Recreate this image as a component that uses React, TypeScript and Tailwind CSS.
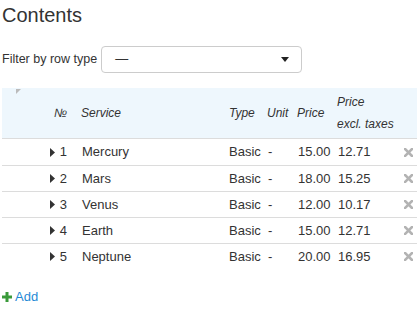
import React from "react";

const rows = [
  { n: 1, s: "Mercury", p: "15.00", e: "12.71" },
  { n: 2, s: "Mars", p: "18.00", e: "15.25" },
  { n: 3, s: "Venus", p: "12.00", e: "10.17" },
  { n: 4, s: "Earth", p: "15.00", e: "12.71" },
  { n: 5, s: "Neptune", p: "20.00", e: "16.95" },
];

const cols = "grid grid-cols-[76px_147px_38px_30px_40px_65px_1fr]";

function Tri() {
  return (
    <svg width="5" height="9" viewBox="0 0 5 9" className="inline-block">
      <path d="M0 0 L5 4.5 L0 9 Z" fill="#333" />
    </svg>
  );
}

function XIcon() {
  return (
    <svg width="9" height="9" viewBox="0 0 9 9">
      <path d="M1 1 L8 8 M8 1 L1 8" stroke="#b3b3b3" strokeWidth="2.6" strokeLinecap="square" />
    </svg>
  );
}

export default function App() {
  return (
    <div className="w-[417px] h-[311px] bg-white text-[#333] pl-[2px] overflow-hidden" style={{ fontFamily: '"Liberation Sans", Arial, sans-serif' }}>
      <div className="text-[20px] leading-[24px] pt-[3px]">Contents</div>
      <div className="flex items-center mt-[19px] h-[26px]">
        <span className="text-[12.5px]">Filter by row type</span>
        <div className="ml-[4px] w-[201px] h-[27px] border border-[#ccc] rounded-[4px] flex items-center justify-between pl-[13px] pr-[12px]">
          <span className="text-[13px]">—</span>
          <svg width="8" height="5" viewBox="0 0 8 5"><path d="M0 0 L8 0 L4 5 Z" fill="#222" /></svg>
        </div>
      </div>
      <div className="mt-[16px] relative bg-[#eef7fd] h-[51px] border-b border-[#dcdcdc] text-[12px] italic">
        <svg width="5" height="5" viewBox="0 0 5 5" className="absolute left-[14px] top-[1px]"><path d="M0 0 L5 0 L0 5 Z" fill="#bbb" /></svg>
        <div className={cols + " h-full items-center"}>
          <div className="text-right pr-[11px]">№</div>
          <div className="pl-[3px]">Service</div>
          <div className="pl-[4px]">Type</div>
          <div className="pl-[4px]">Unit</div>
          <div className="pl-[4px]">Price</div>
          <div className="pl-[4px] leading-[22px]">Price<br />excl. taxes</div>
          <div></div>
        </div>
      </div>
      {rows.map((r, i) => (
        <div key={r.n} className={cols + " h-[26px] items-center text-[13px]" + (i > 0 ? " border-t border-[#dcdcdc]" : "")}>
          <div className="flex items-center justify-end pr-[11px] gap-[5px]"><Tri /><span>{r.n}</span></div>
          <div className="pl-[4px]">{r.s}</div>
          <div className="pl-[4px]">Basic</div>
          <div className="pl-[5px]">-</div>
          <div className="pl-[5px]">{r.p}</div>
          <div className="pl-[5px]">{r.e}</div>
          <div className="flex justify-center pl-[1px]"><XIcon /></div>
        </div>
      ))}
      <div className="mt-[18px] flex items-center text-[13px] text-[#1f8ad5]">
        <svg width="10" height="10" viewBox="0 0 10 10" className="mr-[3px]"><path d="M5 0 V10 M0 5 H10" stroke="#3a9a3a" strokeWidth="3" /></svg>
        <span>Add</span>
      </div>
    </div>
  );
}
